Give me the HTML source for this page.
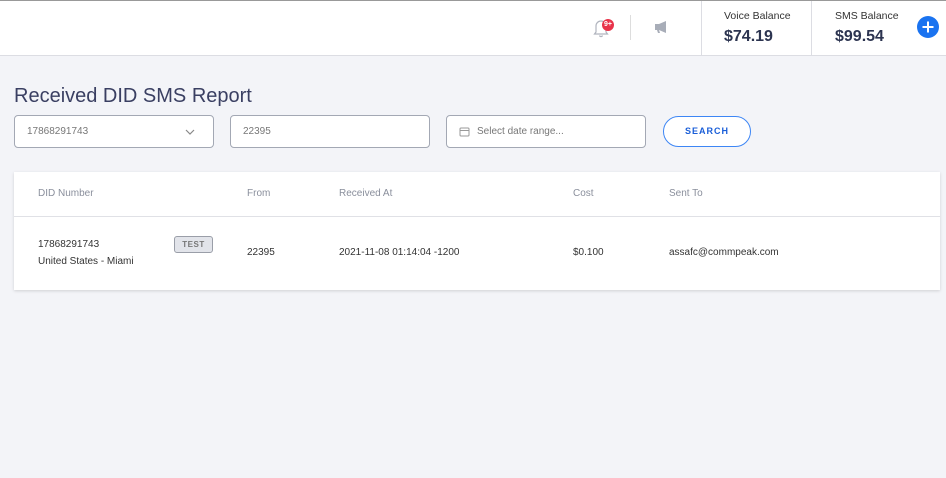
<!DOCTYPE html>
<html><head><style>
*{box-sizing:border-box;margin:0;padding:0}
body{width:946px;height:478px;background:#f3f4f8;font-family:"Liberation Sans",sans-serif;position:relative;overflow:hidden;color:#333}
.top{position:absolute;left:0;top:0;width:946px;height:56px;background:#fff;border-top:1px solid #999;border-bottom:1px solid #dcdde3}
.abs{position:absolute}
.lbl{font-size:10.5px;color:#333}
.val{font-size:16px;font-weight:bold;color:#2c3450}
.inp{position:absolute;top:115px;height:33px;background:#fff;border:1px solid #a3a8b4;border-radius:4px;font-size:10px;color:#777;padding:10px 12px}
.card{position:absolute;left:14px;top:172px;width:926px;height:118px;background:#fff;box-shadow:0 1px 3px rgba(0,0,0,.15)}
.h{position:absolute;top:16px;font-size:10px;color:#8a8f9c}
.c{position:absolute;font-size:10px;color:#333}
</style></head><body>
<div class="top">
 <svg class="abs" style="left:593px;top:17px" width="16" height="20" viewBox="0 0 16 20"><path d="M3 14V8a5 5 0 0110 0v6l1.5 2h-13z M6.5 17.5a1.6 1.6 0 003 0" fill="none" stroke="#b0b4be" stroke-width="1.2"/></svg>
 <div class="abs" style="left:602px;top:18px;width:12px;height:12px;border-radius:6px;background:#e8334a;color:#fff;font-size:7px;font-weight:bold;text-align:center;line-height:12px">9+</div>
 <div class="abs" style="left:630px;top:14px;width:1px;height:25px;background:#ddd"></div>
 <svg class="abs" style="left:654px;top:19px" width="16" height="14" viewBox="0 0 16 14"><path d="M1 4h4l7-3v12l-7-3H1z M3 10l1 3h2l-1-3" fill="#a8adb8"/></svg>
 <div class="abs" style="left:701px;top:0;width:1px;height:55px;background:#dcdde3"></div>
 <div class="abs" style="left:811px;top:0;width:1px;height:55px;background:#dcdde3"></div>
 <div class="abs lbl" style="left:724px;top:9px">Voice Balance</div>
 <div class="abs val" style="left:724px;top:27px">$74.19</div>
 <div class="abs lbl" style="left:835px;top:9px">SMS Balance</div>
 <div class="abs val" style="left:835px;top:27px">$99.54</div>
 <svg class="abs" style="left:917px;top:15px" width="22" height="22" viewBox="0 0 22 22"><circle cx="11" cy="11" r="11" fill="#1a73f0"/><path d="M11 5.5v11M5.5 11h11" stroke="#fff" stroke-width="2"/></svg>
</div>
<div class="abs" style="left:14px;top:85px;font-size:20px;color:#3a3f62">Received DID SMS Report</div>
<div class="inp" style="left:14px;width:200px">17868291743<svg class="abs" style="right:18px;top:13px" width="10" height="6" viewBox="0 0 10 6"><path d="M1 1l4 4 4-4" fill="none" stroke="#888" stroke-width="1.2"/></svg></div>
<div class="inp" style="left:230px;width:200px">22395</div>
<div class="inp" style="left:446px;width:200px;padding-left:30px"><svg class="abs" style="left:12px;top:10px" width="11" height="11" viewBox="0 0 11 11"><rect x="1" y="2" width="9" height="8" rx="1" fill="none" stroke="#999"/><path d="M1 4.5h9" stroke="#999"/></svg>Select date range...</div>
<div class="abs" style="left:663px;top:116px;width:88px;height:31px;border:1px solid #3d86f5;border-radius:16px;background:#fff;color:#1a5ed8;font-size:9px;font-weight:bold;letter-spacing:1px;text-align:center;line-height:29px">SEARCH</div>
<div class="card">
 <div class="h" style="left:24px">DID Number</div>
 <div class="h" style="left:233px">From</div>
 <div class="h" style="left:325px">Received At</div>
 <div class="h" style="left:559px">Cost</div>
 <div class="h" style="left:655px">Sent To</div>
 <div class="abs" style="left:0;top:44px;width:926px;height:1px;background:#e0e1e6"></div>
 <div class="c" style="left:24px;top:67px">17868291743</div>
 <div class="c" style="left:24px;top:84px">United States - Miami</div>
 <div class="abs" style="left:160px;top:64px;width:39px;height:17px;background:#e2e4ea;border:1px solid #9a9ea8;border-radius:3px;font-size:8px;font-weight:bold;color:#777;text-align:center;line-height:15px;letter-spacing:.5px">TEST</div>
 <div class="c" style="left:233px;top:75px">22395</div>
 <div class="c" style="left:325px;top:75px">2021-11-08 01:14:04 -1200</div>
 <div class="c" style="left:559px;top:75px">$0.100</div>
 <div class="c" style="left:655px;top:75px">assafc@commpeak.com</div>
</div>
</body></html>
